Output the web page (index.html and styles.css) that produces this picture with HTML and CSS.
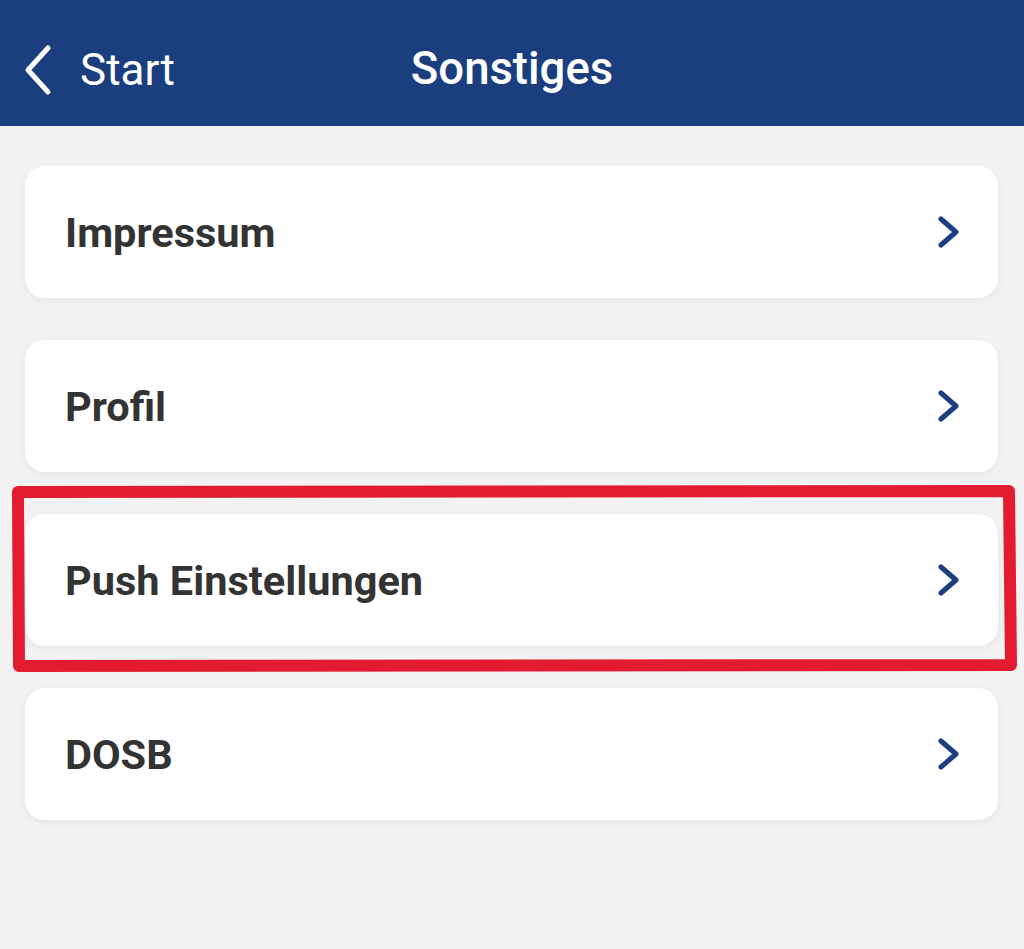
FILE: index.html
```html
<!DOCTYPE html>
<html lang="de">
<head>
<meta charset="utf-8">
<title>Sonstiges</title>
<link rel="stylesheet" href="styles.css">
</head>
<body>
<header class="topbar">
  <a class="back" href="#">
    <svg class="back-icon" viewBox="0 0 32 52" width="32" height="52"><path d="M26 4 L6 26 L26 48" fill="none" stroke="#fff" stroke-width="5" stroke-linecap="round" stroke-linejoin="round"/></svg>
    <span>Start</span>
  </a>
  <h1 class="title">Sonstiges</h1>
</header>
<main class="list">
  <a class="item" href="#"><span>Impressum</span><svg class="chev" viewBox="0 0 24 32" width="24" height="32"><path d="M4 3 L19 16 L4 29" fill="none" stroke="#1a3e7e" stroke-width="5" stroke-linecap="round" stroke-linejoin="round"/></svg></a>
  <a class="item" href="#"><span>Profil</span><svg class="chev" viewBox="0 0 24 32" width="24" height="32"><path d="M4 3 L19 16 L4 29" fill="none" stroke="#1a3e7e" stroke-width="5" stroke-linecap="round" stroke-linejoin="round"/></svg></a>
  <a class="item" href="#"><span>Push Einstellungen</span><svg class="chev" viewBox="0 0 24 32" width="24" height="32"><path d="M4 3 L19 16 L4 29" fill="none" stroke="#1a3e7e" stroke-width="5" stroke-linecap="round" stroke-linejoin="round"/></svg></a>
  <a class="item" href="#"><span>DOSB</span><svg class="chev" viewBox="0 0 24 32" width="24" height="32"><path d="M4 3 L19 16 L4 29" fill="none" stroke="#1a3e7e" stroke-width="5" stroke-linecap="round" stroke-linejoin="round"/></svg></a>
</main>
<svg class="highlight" viewBox="0 0 1024 949" width="1024" height="949"><path d="M18 492 L1009 491 L1011 665 L19 666 Z" fill="none" stroke="#e31b31" stroke-width="12" stroke-linejoin="round"/></svg>
</body>
</html>
```
FILE: styles.css
```css
* { box-sizing: border-box; }
html, body {
  margin: 0;
  padding: 0;
  background: #f2f2f2;
  font-family: Roboto, "Liberation Sans", sans-serif;
  width: 1024px;
  height: 949px;
  overflow: hidden;
}
body { position: relative; }
.topbar {
  height: 126px;
  background: #1a3e7e;
  position: relative;
  display: flex;
  align-items: center;
  justify-content: center;
}
.back {
  position: absolute;
  left: 22px;
  top: 44px;
  display: flex;
  align-items: center;
  gap: 26px;
  color: #fff;
  text-decoration: none;
  font-size: 44px;
  font-weight: 400;
}
.back-icon { display: block; }
.title {
  margin: 0;
  color: #fff;
  font-size: 45.5px;
  font-weight: 500;
  padding-top: 10px;
}
.list {
  padding: 40px 26px 0 25px;
  display: flex;
  flex-direction: column;
  gap: 42px;
}
.item {
  height: 132px;
  background: #fff;
  border-radius: 20px;
  box-shadow: 0 2px 8px rgba(0,0,0,0.06);
  display: flex;
  align-items: center;
  justify-content: space-between;
  padding: 0 37px 0 40px;
  text-decoration: none;
  color: #333333;
  font-size: 41.5px;
  font-weight: 700;
}
.chev { display: block; }
.highlight {
  position: absolute;
  left: 0;
  top: 0;
  pointer-events: none;
}
```
